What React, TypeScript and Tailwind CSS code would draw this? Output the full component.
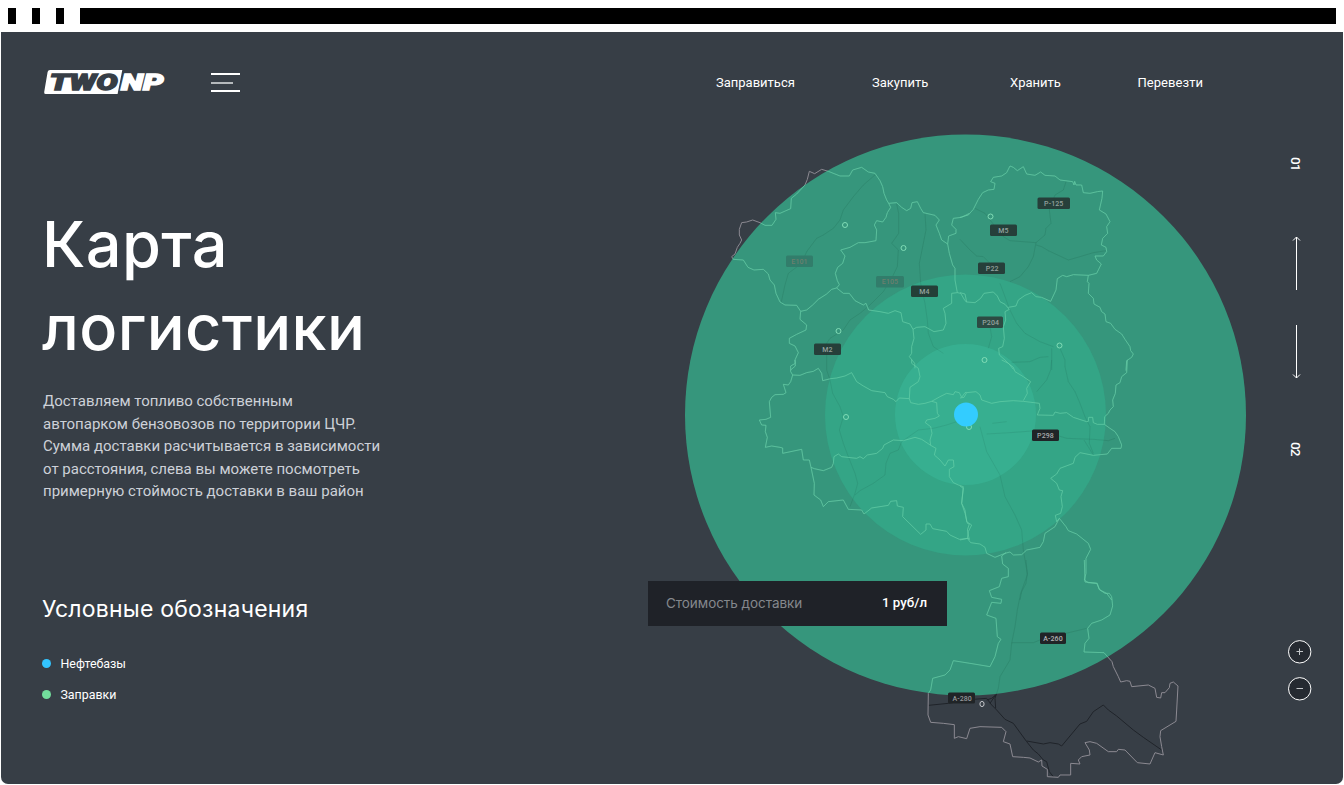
import React from "react";

type Tile = { x: number; y: number; borders: string[]; roads: string[] };

// The map is stored as tiles; coordinates inside a tile are in thirds of a pixel.
const tiles: Tile[] = [
  {
    x: 680,
    y: 130,
    borders: [
      "160,388 155,380 165,372 172,352 180,340 185,330 178,315 178,298 185,278 200,276 218,270 240,278 255,286 276,286 288,268 286,248 300,250 318,242 332,236 334,205 350,192 375,165 382,148 388,124 404,131 425,118 445,124 480,138 508,138 518,120 545,112 565,126 585,130 600,152 608,170 612,190 620,210 626,220 632,232 622,248 618,262 608,276 590,272 583,285 590,300 588,332 555,338 535,338 510,352 482,360 495,378 488,400 473,412 466,430 472,452 478,464 470,474",
      "160,388 190,390 204,412 222,420 250,418 265,432 270,450 283,465 288,490 300,516 315,525 350,526 362,544 380,540 398,525 415,508 440,492 455,478 470,474 490,490 508,490 525,512 550,525 558,520 566,540 600,545 625,550 645,542 663,548 668,575 690,582 699,598",
      "362,544 360,568 380,585 378,600 350,613 328,625 328,640 345,648 355,668 345,690 346,708 332,720",
      "626,220 650,218 665,232 680,242 692,235 696,218 712,215 722,235 730,248 765,256 778,270 768,285 778,310 785,330 803,342",
      "868,250 845,262 820,265 815,285 828,298 828,310 806,318 803,342 808,370 818,405 825,415 825,450 832,488 815,490 815,520 790,535 795,550 798,580 790,600 762,605 735,590 710,592 699,598 702,625 695,650 695,670 688,680 704,700 705,715",
      "832,488 842,490 855,512 860,516",
    ],
    roads: [
      "585,135 550,165 520,200 490,240 480,270 460,295 430,315 410,325 380,365 365,400 325,430 315,465 303,520",
      "650,222 656,250 656,310 635,340 655,360 652,410 635,445 610,485 590,505 570,525 540,550 510,570 490,600 450,625 440,640 440,690",
      "735,250 738,300 728,350 718,400 722,460 735,520 742,570 745,610 760,650 790,670",
    ],
  },
  {
    x: 960,
    y: 130,
    borders: [
      "0,262 25,255 40,238 55,208 68,188 85,180 102,178 105,160 92,155 100,142 125,138 140,128 150,108 160,112 172,122 190,110 200,132 225,136 242,126 255,136 285,138 300,150 338,155 342,165 344,154 348,165 365,165 370,188 390,190 412,185 428,183 426,205 418,240 438,252 450,275 440,290 443,310 428,325 424,345 438,352 440,365 430,378 405,378 410,390 424,402 415,420 410,430 385,436 340,434 320,440 308,436 292,446 288,480 272,514 245,502 228,500 215,488 195,496 175,510 168,528 145,532",
      "0,488 15,492 20,516 45,518 62,505 72,490 100,486 112,498 120,515 135,523 148,538 135,545 137,570 130,590 133,625 128,650 116,655 118,675 135,690 150,705 160,718",
      "385,436 382,455 387,460 385,490 400,505 402,522 420,532 425,545 435,552 438,575 452,580 465,598 485,612 495,628 510,650 512,662 520,672 515,682 500,692 498,722",
    ],
    roads: [
      "0,328 30,360 50,378 70,380 90,400",
      "45,235 75,250 90,270 130,320 150,332 228,338",
      "318,155 310,180 285,195 268,240 273,280 258,295 255,315 228,338 220,380 205,410 180,440 150,455",
      "228,345 245,350 265,362 325,390 360,380 400,368 438,362",
      "120,460 135,500 150,540 170,580 195,610 240,635 280,650",
      "155,697 210,695 240,682 265,680",
      "275,655 275,720",
      "300,655 315,690 315,710",
      "90,590 95,620 85,655",
    ],
  },
  {
    x: 680,
    y: 360,
    borders: [
      "345,0 346,10 332,18 332,35 338,45 360,46 380,38 400,34 415,25 425,40 428,62 452,56 470,54 495,48 515,38 530,65 550,78 575,92 615,98 622,110 640,118 648,125 658,114 688,116",
      "338,45 332,65 325,75 310,73 318,98 310,103 285,104 275,112 268,125 272,172 258,178 238,180 245,195 258,196 256,215 262,232 256,262 275,258 300,262 308,264 308,280 365,268 370,300 388,300 393,322 403,326 430,332 455,322 460,310 462,290 475,282 485,290 530,295 540,290 550,296 562,285 590,280 608,265 612,255 640,240 670,242 705,232 725,238 752,256",
      "393,322 403,370 402,405 422,420 430,440 445,425 490,420 505,448 545,450 552,462 575,444 625,436 632,424 650,422 652,438 670,442 668,470 722,523 738,510 738,492 750,492 758,506 800,514 810,525 838,538 868,535",
      "695,-2 695,10 715,25 720,50 715,65 690,82 688,116 692,128 715,133 735,130 755,124 770,128 772,160 778,168 765,175 740,180 736,188 752,200 756,220 750,240 752,256 768,265 763,285 780,300 795,318 805,300 820,300 822,320 808,328 808,350 820,368 835,375 850,380 845,430 855,460 862,490 868,492 862,510 868,540",
      "755,124 780,110 800,100 820,104 825,95 838,98 845,112 855,98 860,97",
    ],
    roads: [
      "440,0 440,30 450,60 458,100 480,140 490,170 478,210 490,250 505,290 525,340 533,370 525,400 510,440",
      "665,245 655,270 630,280 618,310 615,345 580,370 540,392 525,405",
      "665,245 715,210 760,205 800,195 830,185",
    ],
  },
  {
    x: 960,
    y: 360,
    borders: [
      "125,0 145,10 160,22 165,35 190,50 212,65 200,85 202,100 190,122",
      "0,114 12,112 20,98 48,95 60,105 65,120 95,130 120,125 160,122 190,124 238,130 240,145 232,165 280,166 285,156 300,160 320,158 340,172 380,185 385,184 386,172 398,172 400,188 412,193 433,193 434,170 445,160 450,150 460,140 458,120 466,100 468,75 480,68 485,50 500,38 502,0",
      "433,193 450,205 465,215 475,230 485,255 483,265 455,265 442,282 400,286 360,278 345,292 340,310 300,325 290,342 272,355 290,370 298,390 308,392 303,410 307,440 302,460 286,466 290,485 298,475 285,500 255,520 250,545 240,562 200,570 185,584 160,585 150,576 135,580 105,592 80,580 75,562 60,552 32,548 22,535",
      "0,378 10,385 5,430 15,450 20,485 35,495 25,515 22,535 0,540",
      "298,475 318,500 325,512 350,522 385,550 392,568 378,595 378,640 373,660 385,668 410,670 420,690 440,700 455,720",
    ],
    roads: [
      "275,0 272,30 260,60 230,95",
      "315,20 325,65 345,95 360,130 375,170 390,200 388,250 400,280",
      "97,190 140,185",
      "80,222 150,218 216,213",
      "297,228 320,235 400,238 445,242 465,235",
      "372,240 400,285",
      "60,200 80,275 120,345 135,410 165,465 185,510 190,570 202,640 198,670 185,695 180,720",
    ],
  },
  {
    x: 900,
    y: 560,
    borders: [
      "318,-22 305,-12 308,12 325,25 325,50 305,55 298,80 268,92 275,112 305,118 303,130 275,127 260,165 288,175 292,230 303,238 295,250 285,290 270,320 210,310 160,302 150,330 135,345 98,355 92,390 85,400 84,465 92,487 130,490 163,494 163,535 175,530 200,536 210,505 240,500 305,502 318,515 310,545 330,552 338,590 370,592 390,594 415,606 425,600 426,618 442,628 442,650 475,652 480,645 512,645 512,610 540,612 535,600 545,590 570,585 568,570 555,548 570,545 590,550 625,575 650,575 655,568 675,570 712,608 750,612 765,578 790,585 785,560 780,530 782,512 828,484 830,450 834,378 820,366 810,370 808,383 795,398 785,398 782,414 770,412 765,385 745,375 695,380 690,364 680,362 662,366 655,350 640,320 636,305 612,278 552,276 555,250 567,235 563,205 575,190 605,180 630,165 638,138 635,110 628,100 615,100 597,88 592,70 555,66 553,0",
    ],
    roads: [
      "378,0 382,45 362,100 352,150 345,200 335,250 330,300 300,350 295,385 285,415 287,445",
      "335,248 400,248 420,240",
      "498,220 560,205",
      "86,436 145,430 220,418 260,415 275,435 290,450 315,478 340,490 380,545 400,570 415,582 430,600 440,605 448,635 460,650",
      "260,420 275,415 287,405 270,430",
      "380,543 430,552 450,548 475,552 485,558 540,492 560,484 580,455 610,435 625,450 650,468 700,510 730,532 785,570",
    ],
  },
];

type RoadLabel = { x: number; y: number; w: number; text: string; bg: string; fg: string };
const labels: RoadLabel[] = [
  { x: 1037.5, y: 197.5, w: 32.5, text: "P-125", bg: "#263f3a", fg: "#94a29e" },
  { x: 990, y: 224.5, w: 27, text: "M5", bg: "#263f3a", fg: "#94a29e" },
  { x: 978, y: 262.5, w: 27, text: "P22", bg: "#263f3a", fg: "#94a29e" },
  { x: 911, y: 285.5, w: 27, text: "M4", bg: "#243f38", fg: "#94a29e" },
  { x: 977, y: 316.5, w: 26, text: "P204", bg: "#2c4b43", fg: "#95a19d" },
  { x: 814, y: 343.5, w: 27, text: "M2", bg: "#263f3a", fg: "#94a29e" },
  { x: 1032, y: 429.5, w: 27, text: "P298", bg: "#202427", fg: "#a9abad" },
  { x: 1040, y: 632.5, w: 26, text: "A-260", bg: "#202427", fg: "#b4b5b6" },
  { x: 948, y: 692.5, w: 27, text: "A-280", bg: "#202427", fg: "#96989b" },
  { x: 786, y: 255.5, w: 27, text: "E101", bg: "#327d6b", fg: "#6c7f6e" },
  { x: 876, y: 276, w: 28, text: "E105", bg: "#327d6b", fg: "#6c7f6e" },
];

const cities: [number, number][] = [
  [845, 225],
  [903.5, 248],
  [990.5, 216.5],
  [838.5, 331],
  [1059.5, 345.5],
  [984.5, 360],
  [846, 417],
  [969, 427],
];

function Lines({ kind }: { kind: "borders" | "roads" }) {
  return (
    <>
      {tiles.map((t, i) => (
        <g key={i} transform={`translate(${t.x} ${t.y}) scale(0.33333)`}>
          {t[kind].map((p, j) => (
            <polyline key={j} points={p} fill="none" strokeWidth="3" strokeLinejoin="round" />
          ))}
        </g>
      ))}
    </>
  );
}

function DeliveryMap() {
  return (
    <svg width="630" height="654" viewBox="640 130 630 654" className="block">
      <defs>
        <clipPath id="zone">
          <circle cx="965.5" cy="415" r="280.5" />
        </clipPath>
      </defs>
      <g stroke="#1f2329">
        <Lines kind="roads" />
      </g>
      <g stroke="#8c8a92">
        <Lines kind="borders" />
      </g>
      <circle cx="965.5" cy="415" r="280.5" fill="#37a585" fillOpacity="0.86" />
      <circle cx="965.5" cy="415" r="140.5" fill="#32b390" fillOpacity="0.5" />
      <circle cx="965.5" cy="414.5" r="70.5" fill="#3aba99" fillOpacity="0.5" />
      <g clipPath="url(#zone)">
        <g stroke="#1e5b4c" strokeOpacity="0.13">
          <Lines kind="roads" />
        </g>
        <g stroke="#69d2aa" strokeOpacity="0.6">
          <Lines kind="borders" />
        </g>
      </g>
      {cities.map(([x, y]) => (
        <circle key={x} cx={x} cy={y} r="2.5" fill="none" stroke="#80dcb6" />
      ))}
      <ellipse cx="982" cy="704" rx="2.1" ry="2.6" fill="none" stroke="#c5c7ca" />
      <circle cx="966" cy="414.5" r="12" fill="#33ccff" />
      {labels.map((l) => (
        <g key={l.text}>
          <rect x={l.x} y={l.y} width={l.w} height={l.text === "A-280" ? 11 : 11.5} rx="1.5" fill={l.bg} />
          <text
            x={l.x + l.w / 2 + (l.text === "P22" || l.text === "P204" || l.text === "A-280" ? 0.7 : 0)}
            y={l.y + 8.3}
            fontSize="7"
            letterSpacing="0.1"
            textAnchor="middle"
            fontFamily="Roboto, sans-serif"
            fontWeight="500"
            fill={l.fg}
          >
            {l.text}
          </text>
        </g>
      ))}
    </svg>
  );
}

function Logo() {
  return (
    <svg width="122" height="26" viewBox="43 69 122 26" className="block">
      <path d="M50 70H122.3L117.6 94H45.5Q43.8 94 44.2 92L47.6 72Q48 70 50 70Z" fill="#fff" />
      <g fontFamily="Roboto, sans-serif" fontWeight="900" fontStyle="italic" fontSize="22" strokeWidth="1.3">
        <text x="49.5" y="89.5" textLength="68" lengthAdjust="spacingAndGlyphs" fill="#373e46" stroke="#373e46">
          TWO
        </text>
        <text x="121" y="89.5" textLength="42.5" lengthAdjust="spacingAndGlyphs" fill="#fff" stroke="#fff">
          NP
        </text>
      </g>
    </svg>
  );
}

function Arrow({ down = false }: { down?: boolean }) {
  return (
    <svg width="9" height="54" viewBox="0 0 9 54" fill="none" stroke="#fff" className="block">
      <path d={down ? "M4.5 0V53M1 49.5L4.5 53L8 49.5" : "M4.5 54V1M1 4.5L4.5 1L8 4.5"} />
    </svg>
  );
}

function ZoomButton({ minus = false }: { minus?: boolean }) {
  return (
    <button aria-label={minus ? "−" : "+"} className="block size-6">
      <svg width="24" height="24" viewBox="0 0 24 24" fill="none" stroke="#fff">
        <circle cx="11.7" cy="11.8" r="11.2" fill="#252a31" />
        <path d={minus ? "M8.5 11.5H15" : "M8.5 11.5H15M11.5 8.5V15"} stroke="#c2c5c8" />
      </svg>
    </button>
  );
}

export default function App() {
  return (
    <div className="h-[785px] w-[1344px] overflow-hidden bg-white px-px font-['Roboto',sans-serif]">
      <div className="flex h-8 items-center gap-4 px-[7px]">
        <span className="h-4 w-2 bg-black" />
        <span className="h-4 w-2 bg-black" />
        <span className="h-4 w-2 bg-black" />
        <span className="h-4 flex-1 bg-black" />
      </div>
      <div className="h-[752px] overflow-hidden rounded-b-[7px] bg-[#373e46] text-white">
        <header className="flex h-[98px] items-start pl-[42px]">
          <div className="pt-[37px]">
            <Logo />
          </div>
          <button aria-label="Menu" className="mt-[41px] ml-[46px] flex w-[30px] flex-col items-start gap-[6.5px]">
            <span className="h-0.5 w-[29px] bg-white" />
            <span className="h-0.5 w-[22px] bg-[#b5b9bc]" />
            <span className="h-0.5 w-[29px] bg-white" />
          </button>
          <nav className="ml-[475px] flex pt-[41px] text-[13px] leading-5 whitespace-nowrap">
            <a className="w-[156px]">Заправиться</a>
            <a className="w-[138px]">Закупить</a>
            <a className="w-[127.5px]">Хранить</a>
            <a className="tracking-[0.05px]">Перевезти</a>
          </nav>
        </header>
        <main className="grid h-[654px] grid-cols-[639px_630px_73px]">
          <section className="pt-[73px] pl-[41px] whitespace-nowrap">
            <h1 className="font-['Inter',sans-serif] text-[63px] leading-[82.5px] font-medium tracking-[0.4px]">
              Карта
              <br />
              логистики
            </h1>
            <p className="mt-[22px] pl-px text-[15px] leading-[22.6px] text-[#cdd1d8]">
              Доставляем топливо собственным
              <br />
              автопарком бензовозов по территории ЦЧР.
              <br />
              Сумма доставки расчитывается в зависимости
              <br />
              от расстояния, слева вы можете посмотреть
              <br />
              примерную стоймость доставки в ваш район
            </p>
            <h2 className="mt-[90px] font-['Inter',sans-serif] text-[23px] leading-8 tracking-[0.22px]">
              Условные обозначения
            </h2>
            <ul className="mt-[29px] text-[12.4px] leading-5">
              <li className="flex items-center gap-[9.5px]">
                <span className="size-[9px] rounded-full bg-[#33c5ff]" />
                Нефтебазы
              </li>
              <li className="mt-[11px] flex items-center gap-[9.5px]">
                <span className="size-[9px] rounded-full bg-[#72de9c]" />
                Заправки
              </li>
            </ul>
          </section>
          <section className="relative">
            <DeliveryMap />
            <div className="absolute top-[450.5px] left-2 flex h-[45px] w-[299px] items-center justify-between bg-[#1f2228] pr-5 pl-[18px]">
              <span className="font-['Inter',sans-serif] text-[13.5px] tracking-[-0.05px] text-[#85888d]">
                Стоимость доставки
              </span>
              <span className="text-[13.3px] font-medium">1 руб/л</span>
            </div>
          </section>
          <aside className="flex flex-col items-center pr-[21px] text-[13.5px] font-medium tracking-[-0.8px]">
            <span className="mt-[27px] h-4 leading-[18px] [writing-mode:vertical-rl]">01</span>
            <div className="mt-[63px]">
              <Arrow />
            </div>
            <div className="mt-[35px]">
              <Arrow down />
            </div>
            <span className="mt-[63px] h-4 leading-[18px] [writing-mode:vertical-rl]">02</span>
            <div className="mt-[182px] ml-[7px] flex flex-col gap-[13.3px]">
              <ZoomButton />
              <ZoomButton minus />
            </div>
          </aside>
        </main>
      </div>
    </div>
  );
}
